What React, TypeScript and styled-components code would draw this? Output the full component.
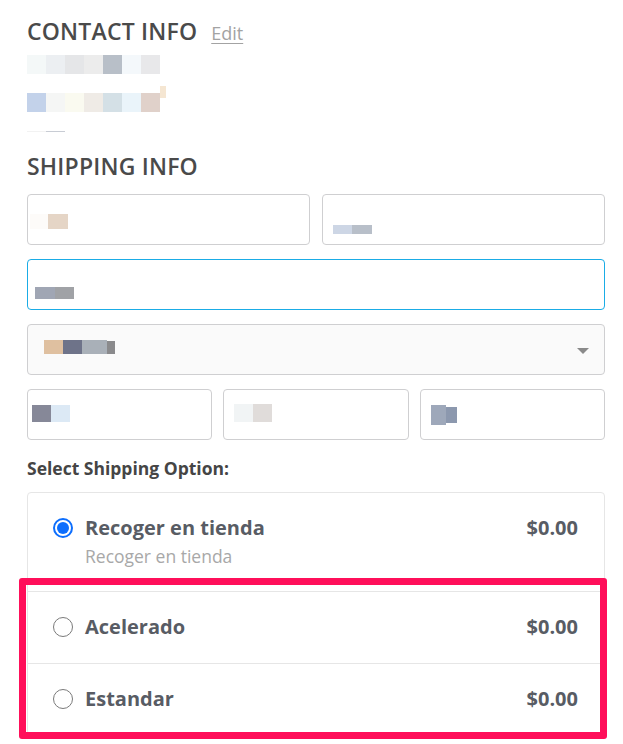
import React from "react";
import styled, { createGlobalStyle } from "styled-components";

const Global = createGlobalStyle`
  html, body { margin: 0; padding: 0; background: #fff; }
  body { font-family: "Open Sans", "Liberation Sans", sans-serif; color: #4a4a4a; }
  * { box-sizing: border-box; }
`;

const Page = styled.div`
  position: relative;
  width: 623px;
  height: 744px;
  overflow: hidden;
  padding: 17px 18px 0 27px;
`;

const HeadingRow = styled.div`
  display: flex;
  align-items: baseline;
  gap: 14px;
  height: 32px;
`;

const Heading = styled.h2`
  margin: 0;
  font-size: 23px;
  font-weight: 600;
  line-height: 28px;
  color: #4a4a4a;
  letter-spacing: 0.2px;
`;

const EditLink = styled.a`
  font-size: 18px;
  color: #a3a3a3;
  text-decoration: underline;
  text-decoration-thickness: 1px;
  text-underline-offset: 3px;
`;

const Redacted = styled.div<{ $top: number; $h: number }>`
  display: flex;
  align-items: flex-start;
  margin-top: ${(p) => p.$top}px;
  height: ${(p) => p.$h}px;
`;

const Cell = styled.span<{ $c: string; $w: number; $h?: number; $dy?: number }>`
  display: block;
  width: ${(p) => p.$w}px;
  height: ${(p) => (p.$h ? `${p.$h}px` : "100%")};
  margin-top: ${(p) => p.$dy || 0}px;
  background: ${(p) => p.$c};
`;

const SectionHeading = styled(Heading)`
  margin-top: 20px;
`;

const Form = styled.div`
  display: flex;
  flex-direction: column;
  gap: 14px;
  margin-top: 14px;
  width: 578px;
`;

const Row = styled.div<{ $cols: number; $gap: number }>`
  display: grid;
  grid-template-columns: repeat(${(p) => p.$cols}, 1fr);
  gap: ${(p) => p.$gap}px;
`;

const Field = styled.div<{ $focus?: boolean; $select?: boolean; $pt: number; $pl: number }>`
  position: relative;
  height: 51px;
  border: 1px solid ${(p) => (p.$focus ? "#1aace6" : "#cfcfd1")};
  border-radius: 4px;
  background: ${(p) => (p.$select ? "#fafafa" : "#fff")};
  padding: ${(p) => p.$pt}px 0 0 ${(p) => p.$pl}px;
`;

const Arrow = styled.span`
  position: absolute;
  right: 15px;
  top: 23px;
  width: 0;
  height: 0;
  border-left: 6px solid transparent;
  border-right: 6px solid transparent;
  border-top: 6px solid #8a8a8a;
`;

const OptionLabel = styled.div`
  margin-top: 16px;
  font-size: 17.5px;
  font-weight: 700;
  color: #454545;
  line-height: 24px;
`;

const OptionsBox = styled.div`
  position: relative;
  margin-top: 12px;
  width: 578px;
  border: 1px solid #e6e6e6;
  border-radius: 4px;
`;

const OptionRow = styled.label<{ $last?: boolean }>`
  display: flex;
  align-items: flex-start;
  padding: 21px 26px 0 25px;
  height: ${(p) => (p.$last ? 71 : 72)}px;
  border-top: 1px solid #e6e6e6;
  &:first-child {
    border-top: none;
    height: 98px;
  }
`;

const Radio = styled.span<{ $checked?: boolean }>`
  flex: none;
  width: 20px;
  height: 20px;
  margin-top: 4px;
  border-radius: 50%;
  border: ${(p) => (p.$checked ? "2px solid #0d6efd" : "1.5px solid #7a7a7a")};
  background: #fff;
  display: flex;
  align-items: center;
  justify-content: center;
  &::after {
    content: "";
    display: ${(p) => (p.$checked ? "block" : "none")};
    width: 12px;
    height: 12px;
    border-radius: 50%;
    background: #0d6efd;
  }
`;

const OptionText = styled.div`
  flex: 1;
  margin-left: 12px;
  display: flex;
  flex-direction: column;
`;

const OptionTitle = styled.div`
  font-size: 20px;
  font-weight: 700;
  line-height: 28px;
  color: #585c64;
`;

const OptionSub = styled.div`
  font-size: 17.5px;
  line-height: 22px;
  margin-top: 3px;
  color: #a8a8a8;
`;

const Price = styled.div`
  font-size: 20px;
  font-weight: 700;
  line-height: 28px;
  color: #585c64;
`;

const Highlight = styled.div`
  position: absolute;
  left: -9px;
  top: 85px;
  width: 588px;
  height: 161px;
  border: 7px solid #ff0f5a;
  border-radius: 3px;
  pointer-events: none;
`;

type C = [string, number, number?, number?];

const Block = ({ cells, top, h }: { cells: C[]; top: number; h: number }) => (
  <Redacted $top={top} $h={h}>
    {cells.map(([c, w, hh, dy], i) => (
      <Cell key={i} $c={c} $w={w} $h={hh} $dy={dy} />
    ))}
  </Redacted>
);

const options = [
  { title: "Recoger en tienda", sub: "Recoger en tienda", checked: true },
  { title: "Acelerado" },
  { title: "Estandar" },
];

export default function App() {
  return (
    <>
      <Global />
      <Page>
        <HeadingRow>
          <Heading>CONTACT INFO</Heading>
          <EditLink>Edit</EditLink>
        </HeadingRow>
        <Block
          top={6}
          h={19}
          cells={[
            ["#f4f8f8", 19],
            ["#eceff2", 19],
            ["#e5e6e8", 19],
            ["#ececec", 19],
            ["#b8bfc8", 19],
            ["#f4f8fb", 19],
            ["#e8e8ea", 19],
          ]}
        />
        <Block
          top={12}
          h={26}
          cells={[
            ["#c3d2ea", 19, 19, 7],
            ["#f5f6f5", 19, 19, 7],
            ["#fafaf0", 19, 19, 7],
            ["#efebe6", 19, 19, 7],
            ["#d4e0e6", 19, 19, 7],
            ["#eaf4fa", 19, 19, 7],
            ["#e0d1ca", 19, 19, 7],
            ["#f5e6d2", 6, 12, 0],
          ]}
        />
        <Block
          top={19}
          h={1}
          cells={[
            ["#f2f2f2", 19],
            ["#c8ccd4", 19],
          ]}
        />
        <SectionHeading>SHIPPING INFO</SectionHeading>
        <Form>
          <Row $cols={2} $gap={12}>
            <Field $pt={19} $pl={2}>
              <Block top={0} h={15} cells={[["#fdfbf9", 18], ["#e5d5c6", 20]]} />
            </Field>
            <Field $pt={30} $pl={10}>
              <Block top={0} h={9} cells={[["#cdd6e5", 19], ["#b8bfc9", 20]]} />
            </Field>
          </Row>
          <Field $focus $pt={27} $pl={7}>
            <Block top={0} h={12} cells={[["#a0a6b4", 20], ["#a0a2a6", 19]]} />
          </Field>
          <Field $select $pt={15} $pl={16}>
            <Block
              top={0}
              h={14}
              cells={[
                ["#dfc0a0", 19],
                ["#6e7389", 19],
                ["#a9b0b8", 25],
                ["#8a8a8c", 8, 13, 1],
              ]}
            />
            <Arrow />
          </Field>
          <Row $cols={3} $gap={11}>
            <Field $pt={15} $pl={4}>
              <Block top={0} h={17} cells={[["#868898", 19], ["#dce9f5", 19]]} />
            </Field>
            <Field $pt={14} $pl={10}>
              <Block top={0} h={18} cells={[["#f1f4f5", 19], ["#e0dcda", 19]]} />
            </Field>
            <Field $pt={15} $pl={10}>
              <Block top={0} h={20} cells={[["#9ea8ba", 15], ["#8c98ae", 11, 16, 2]]} />
            </Field>
          </Row>
        </Form>
        <OptionLabel>Select Shipping Option:</OptionLabel>
        <OptionsBox>
          {options.map((o, i) => (
            <OptionRow key={o.title} $last={i === options.length - 1}>
              <Radio $checked={o.checked} />
              <OptionText>
                <OptionTitle>{o.title}</OptionTitle>
                {o.sub && <OptionSub>{o.sub}</OptionSub>}
              </OptionText>
              <Price>$0.00</Price>
            </OptionRow>
          ))}
          <Highlight />
        </OptionsBox>
      </Page>
    </>
  );
}
